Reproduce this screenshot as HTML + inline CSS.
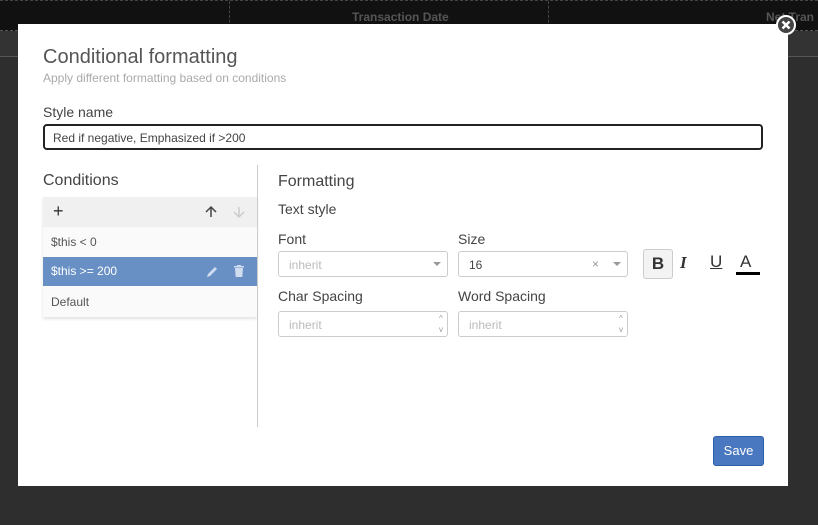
<!DOCTYPE html>
<html><head><style>
*{box-sizing:border-box;margin:0;padding:0}
body{width:818px;height:525px;background:#2e2e2e;font-family:"Liberation Sans",sans-serif;position:relative;overflow:hidden;color:#444}
.hdr{position:absolute;left:0;top:0;width:818px;height:31px;background:#111;border-top:1px dashed #444;border-bottom:1px dashed #555}
.hdr span{position:absolute;top:9px;font-size:12px;font-weight:bold;color:#555}
.band{position:absolute;left:0;top:31px;width:818px;height:26px;background:#333;border-bottom:1px solid #555}
.modal{position:absolute;left:18px;top:24px;width:770px;height:462px;background:#fff}
.close{position:absolute;left:776px;top:15px;width:20px;height:20px}
.abs{position:absolute}
.lbl{font-size:14px;color:#444}
.inp{position:absolute;border:1px solid #ccc;border-radius:3px;height:26px;font-size:12px;color:#bbb;padding:6px 10px}
</style></head><body>
<div class="hdr"><span style="left:352px">Transaction Date</span><span style="left:766px">Net Tran</span>
<div style="position:absolute;left:229px;top:0;height:31px;border-left:1px dashed #444"></div>
<div style="position:absolute;left:548px;top:0;height:31px;border-left:1px dashed #444"></div></div>
<div class="band"></div>
<div class="modal">
<div class="abs" style="left:25px;top:22px;font-size:20px;color:#555">Conditional formatting</div>
<div class="abs" style="left:25px;top:47px;font-size:12px;color:#aaa">Apply different formatting based on conditions</div>
<div class="abs lbl" style="left:25px;top:80px">Style name</div>
<div class="abs" style="left:25px;top:100px;width:720px;height:26px;border:2px solid #222;border-radius:4px;font-size:12px;color:#444;padding:5px 8px">Red if negative, Emphasized if &gt;200</div>
<div class="abs" style="left:25px;top:148px;font-size:16px;color:#444">Conditions</div>
<div class="abs" style="left:25px;top:173px;width:214px;height:120px;box-shadow:0 2px 3px rgba(0,0,0,.12);background:#fafafa">
 <div style="height:30px;background:#f0f0f0;position:relative">
  <div class="abs" style="left:10px;top:4px;font-size:18px;color:#333">+</div>
  <svg class="abs" style="left:161px;top:8px" width="14" height="14" viewBox="0 0 14 14"><path d="M7 12V2M2 7l5-5 5 5" stroke="#444" stroke-width="1.5" fill="none"/></svg>
  <svg class="abs" style="left:189px;top:8px" width="14" height="14" viewBox="0 0 14 14"><path d="M7 2v10M2 7l5 5 5-5" stroke="#ccc" stroke-width="1.5" fill="none"/></svg>
 </div>
 <div style="height:30px;font-size:12px;color:#555;padding:8px 8px">$this &lt; 0</div>
 <div style="height:29px;background:#6890c4;font-size:12px;color:#fff;padding:7px 8px;position:relative">$this &gt;= 200
  <svg class="abs" style="left:162px;top:8px" width="14" height="14" viewBox="0 0 14 14"><path d="M2 12l1-3 7-7 2 2-7 7z" fill="#d0dcef"/></svg>
  <svg class="abs" style="left:190px;top:7px" width="12" height="14" viewBox="0 0 12 14"><path d="M1 2h10v1.5H1zM4 1h4v1H4zM2 4h8l-.7 9H2.7z" fill="#d0dcef"/></svg>
 </div>
 <div style="height:31px;font-size:12px;color:#555;padding:9px 8px">Default</div>
</div>
<div class="abs" style="left:239px;top:141px;height:262px;border-left:1px solid #ccc"></div>
<div class="abs" style="left:260px;top:149px;font-size:16px;color:#444">Formatting</div>
<div class="abs lbl" style="left:260px;top:177px">Text style</div>
<div class="abs lbl" style="left:260px;top:207px">Font</div>
<div class="abs lbl" style="left:440px;top:207px">Size</div>
<div class="inp" style="left:260px;top:227px;width:170px">inherit<span style="position:absolute;right:6px;top:10px;border:4px solid transparent;border-top-color:#999"></span></div>
<div class="inp" style="left:440px;top:227px;width:170px;color:#444">16<span style="position:absolute;right:28px;top:5px;color:#999">×</span><span style="position:absolute;right:6px;top:10px;border:4px solid transparent;border-top-color:#999"></span></div>
<div class="abs" style="left:625px;top:225px;width:30px;height:30px;background:#f3f3f3;border:1px solid #ccc;border-radius:3px;font-weight:bold;font-size:17px;color:#333;text-align:center;line-height:28px">B</div>
<div class="abs" style="left:662px;top:229px;font-style:italic;font-weight:bold;font-size:17px;color:#333;font-family:'Liberation Serif',serif">I</div>
<div class="abs" style="left:692px;top:228px;text-decoration:underline;font-size:17px;color:#333">U</div>
<div class="abs" style="left:722px;top:228px;font-size:17px;color:#333">A</div>
<div class="abs" style="left:718px;top:248px;width:24px;height:3px;background:#000"></div>
<div class="abs lbl" style="left:260px;top:264px">Char Spacing</div>
<div class="abs lbl" style="left:440px;top:264px">Word Spacing</div>
<div class="inp" style="left:260px;top:287px;width:170px">inherit<span style="position:absolute;right:4px;top:1px;font-size:8px;color:#999;line-height:11px">^<br>v</span></div>
<div class="inp" style="left:440px;top:287px;width:170px">inherit<span style="position:absolute;right:4px;top:1px;font-size:8px;color:#999;line-height:11px">^<br>v</span></div>
<div class="abs" style="left:695px;top:412px;width:51px;height:30px;background:#4a78c0;border:1px solid #2d5ea8;border-radius:3px;color:#fff;font-size:13px;text-align:center;line-height:28px">Save</div>
</div>
<svg class="close" viewBox="0 0 20 20"><circle cx="10" cy="10" r="9" fill="#444" stroke="#fff" stroke-width="2"/><path d="M6.5 6.5l7 7M13.5 6.5l-7 7" stroke="#fff" stroke-width="2.5"/></svg>
</body></html>
